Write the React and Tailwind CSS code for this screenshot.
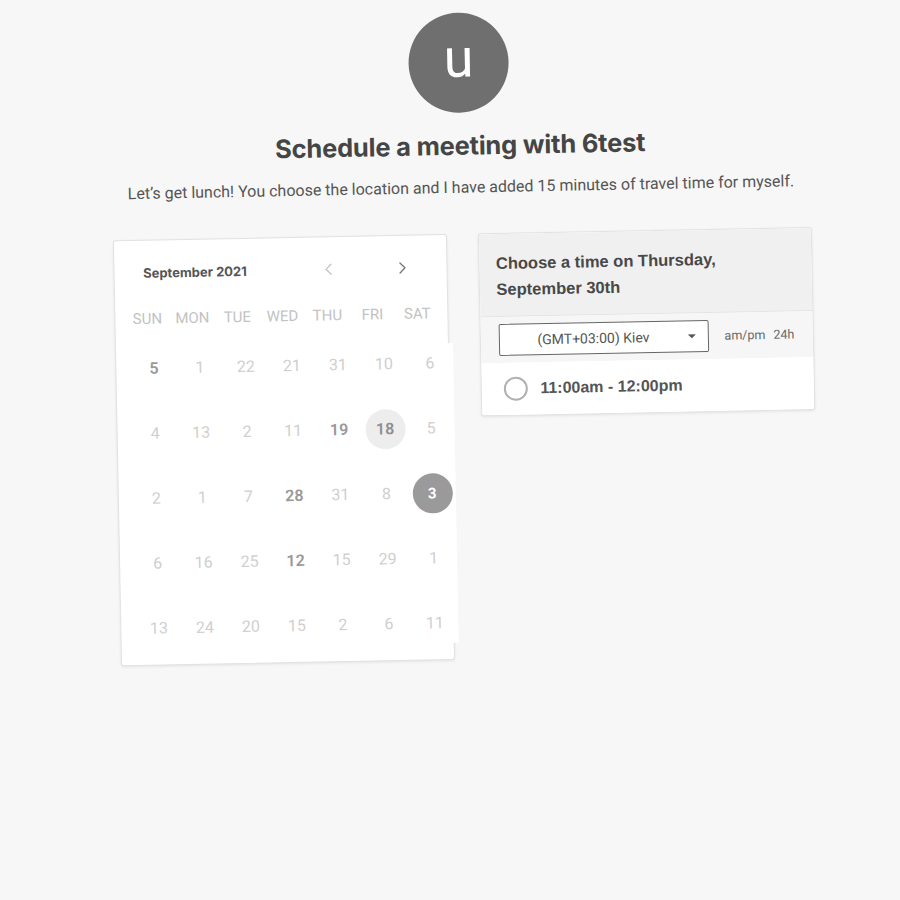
import { ChevronLeft, ChevronRight } from 'lucide-react';

const weekdays = ['SUN', 'MON', 'TUE', 'WED', 'THU', 'FRI', 'SAT'];

// [label, state] — state: 0 muted, 1 available, 2 highlighted, 3 selected
const weeks = [
  [['5', 1], ['1', 0], ['22', 0], ['21', 0], ['31', 0], ['10', 0], ['6', 0]],
  [['4', 0], ['13', 0], ['2', 0], ['11', 0], ['19', 1], ['18', 2], ['5', 0]],
  [['2', 0], ['1', 0], ['7', 0], ['28', 1], ['31', 0], ['8', 0], ['3', 3]],
  [['6', 0], ['16', 0], ['25', 0], ['12', 1], ['15', 0], ['29', 0], ['1', 0]],
  [['13', 0], ['24', 0], ['20', 0], ['15', 0], ['2', 0], ['6', 0], ['11', 0]],
];

const DayCell = ({ label, state }) => {
  if (state === 3) {
    return (
      <div className="flex items-center justify-center">
        <span className="w-10 h-10 rounded-full bg-[#9a9a9a] text-white font-bold text-[15px] flex items-center justify-center">
          {label}
        </span>
      </div>
    );
  }
  if (state === 2) {
    return (
      <div className="flex items-center justify-center">
        <span className="w-10 h-10 rounded-full bg-[#ededed] text-[#8f8f8f] font-semibold text-[16px] flex items-center justify-center">
          {label}
        </span>
      </div>
    );
  }
  return (
    <div className="flex items-center justify-center h-10">
      <span
        className={
          state === 1
            ? 'text-[16px] font-semibold text-[#999]'
            : 'text-[16px] text-[#cfcfcf]'
        }
      >
        {label}
      </span>
    </div>
  );
};

const Calendar = () => (
  <div className="w-[334px] h-[426px] bg-white border border-[#e2e2e2] rounded-[3px] shadow-[0_1px_3px_rgba(0,0,0,0.08)] pl-[10px] pt-[20px] font-['Roboto',sans-serif]">
    <div className="flex items-center h-[24px] pl-[19px]">
      <span className="text-[13px] font-bold text-[#555] font-['Inter',sans-serif]">September 2021</span>
      <ChevronLeft className="w-5 h-5 text-[#c4c4c4] ml-[72px]" strokeWidth={1.6} />
      <ChevronRight className="w-5 h-5 text-[#777] ml-[54px]" strokeWidth={1.6} />
    </div>
    <div className="grid grid-cols-7 w-[315px] mt-[23px]">
      {weekdays.map((d) => (
        <div key={d} className="text-center text-[15px] text-[#c2c2c2]">
          {d}
        </div>
      ))}
    </div>
    <div className="mt-[18px] ml-[5px] w-[322px] bg-white flex flex-col gap-[25px]">
      {weeks.map((w, i) => (
        <div key={i} className="grid grid-cols-7">
          {w.map(([label, state], j) => (
            <DayCell key={j} label={label} state={state} />
          ))}
        </div>
      ))}
    </div>
  </div>
);

const TimePanel = () => (
  <div className="w-[334px] bg-white border border-[#e2e2e2] rounded-[3px] shadow-[0_1px_3px_rgba(0,0,0,0.08)] overflow-hidden font-['Liberation_Sans',Arial,sans-serif]">
    <div className="bg-[#f0f0f0] px-[17px] pt-[16px] pb-[14px] border-b border-[#e4e4e4]">
      <p className="text-[16.5px] font-bold text-[#484848] leading-[26px]">
        Choose a time on Thursday,
        <br />
        September 30th
      </p>
    </div>
    <div className="bg-[#f6f6f6] flex items-center px-[18px] h-[46px]">
      <div className="relative w-[212px] h-[32px] bg-white border border-[#666] rounded-[2px] flex items-center justify-center text-[14px] text-[#555] font-['Roboto',sans-serif]">
        <span className="pr-[20px]">(GMT+03:00) Kiev</span>
        <span className="absolute right-[12px] top-[13px] w-0 h-0 border-l-[4px] border-r-[4px] border-t-[4px] border-l-transparent border-r-transparent border-t-[#555]" />
      </div>
      <span className="ml-[16px] text-[12.5px] text-[#666] font-['Roboto',sans-serif]">am/pm</span>
      <span className="ml-[8px] text-[12.5px] text-[#666] font-['Roboto',sans-serif]">24h</span>
    </div>
    <div className="bg-white flex items-center h-[52px] px-[22px]">
      <span className="w-[24px] h-[24px] rounded-full border-2 border-[#b0b0b0]" />
      <span className="ml-[13px] text-[16px] font-bold text-[#555]">11:00am - 12:00pm</span>
    </div>
  </div>
);

export default function App() {
  return (
    <div className="w-[900px] h-[900px] bg-[#f7f7f7] overflow-hidden">
      <div className="w-[900px] h-[900px] rotate-[-1.1deg] origin-center flex flex-col items-center pl-[32px] pt-[13px]">
        <div className="w-[100px] h-[100px] rounded-full bg-[#6f6f6f] flex items-center justify-center">
          <span className="text-white text-[54px] leading-none font-normal font-['Roboto',sans-serif] -mt-[8px]">u</span>
        </div>
        <h1 className="mt-[14px] text-[25.5px] font-bold text-[#454545] font-['Inter',sans-serif] tracking-[-0.2px]">
          Schedule a meeting with 6test
        </h1>
        <p className="mt-[11px] text-[16px] text-[#555] font-['Roboto',sans-serif]">
          Let’s get lunch! You choose the location and I have added 15 minutes of travel time for myself.
        </p>
        <div className="mt-[34px] flex items-start gap-[31px]">
          <Calendar />
          <TimePanel />
        </div>
      </div>
    </div>
  );
}
